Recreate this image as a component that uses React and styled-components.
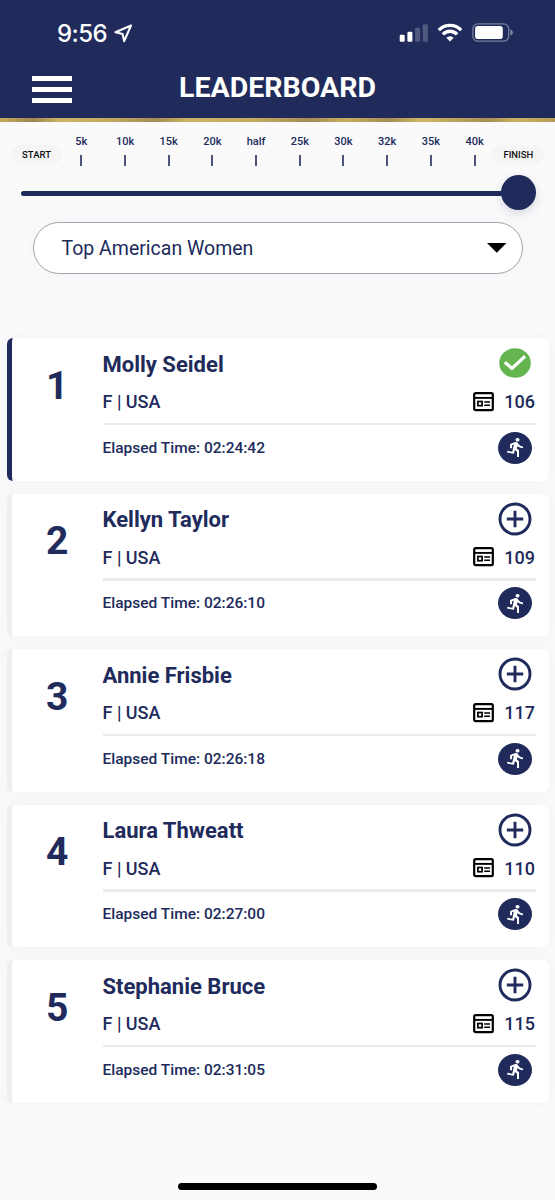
import React from "react";
import styled, { createGlobalStyle } from "styled-components";

const navy = "#202b5c";

const GlobalStyle = createGlobalStyle`
  * {
    box-sizing: border-box;
  }
  body {
    margin: 0;
    background: #fafafb;
    color: ${navy};
    font-family: Roboto, sans-serif;
  }
`;

const Page = styled.div`
  display: flex;
  flex-direction: column;
  width: 555px;
  height: 1200px;
  overflow: hidden;
`;

const Header = styled.header`
  height: 118px;
  background: ${navy};
  color: #fff;
`;

const StatusBar = styled.div`
  display: flex;
  justify-content: space-between;
  align-items: center;
  height: 65px;
  padding: 0 42px 0 57px;
`;

const Clock = styled.div`
  display: flex;
  align-items: center;
  gap: 7px;
  font-family: Inter, sans-serif;
  font-size: 24px;
  font-weight: 500;
  letter-spacing: -0.6px;
  line-height: 28px;
  padding-top: 2px;
`;

const TitleBar = styled.div`
  display: grid;
  grid-template-columns: 40px 1fr 40px;
  align-items: center;
  height: 46px;
  padding: 0 32px;
`;

const MenuButton = styled.button`
  display: flex;
  flex-direction: column;
  gap: 6px;
  padding: 3px 0 0;
  border: 0;
  background: none;
`;

const MenuBar = styled.span`
  width: 40px;
  height: 5px;
  background: #fff;
`;

const Title = styled.h1`
  margin: 0;
  text-align: center;
  font-size: 28.5px;
  font-weight: 700;
  line-height: 44px;
`;

const GoldRule = styled.div`
  flex: none;
  height: 4px;
  background: linear-gradient(
    100deg,
    #c6ab5c 0%,
    #9f8650 6%,
    #cdb463 11%,
    #c3a95f 20%,
    #a38b55 28%,
    #ccb363 34%,
    #c3aa60 46%,
    #a48b55 56%,
    #c9ae5e 62%,
    #a58d56 70%,
    #d0b765 76%,
    #a68e55 88%,
    #cbb160 93%,
    #b69b58 100%
  );
`;

const Course = styled.section`
  display: flex;
  flex: none;
  height: 51px;
  padding-left: 11px;
`;

const Pill = styled.div`
  position: relative;
  width: ${({ $wide }) => ($wide ? 52 : 51)}px;
  height: 19px;
  margin: 23px 0 0 ${({ $wide }) => ($wide ? -4 : 0)}px;
  border-radius: 10px;
  background: #f5f5f5;
  color: #111;
  text-align: center;
  font-size: 9.5px;
  font-weight: 500;
  line-height: 19px;
  &::after {
    content: "";
    position: absolute;
    top: 18px;
    left: 21px;
    border: 4px solid transparent;
    border-top-color: #f5f5f5;
  }
`;

const Splits = styled.div`
  display: flex;
  margin-left: -2.5px;
`;

const Split = styled.div`
  display: flex;
  flex-direction: column;
  align-items: center;
  gap: 7px;
  width: 43.7px;
  padding-top: 13px;
  font-size: 11px;
  font-weight: 500;
  line-height: 13px;
  &::after {
    content: "";
    height: 11px;
    border-left: 2px solid ${navy};
    opacity: 0.8;
  }
`;

const Slider = styled.div`
  display: flex;
  flex: none;
  align-items: center;
  height: 38px;
  padding: 0 19.5px 0 21px;
`;

const Track = styled.div`
  flex: 1;
  height: 5px;
  margin: 2px -2px 0 0;
  border-radius: 3px;
  background: ${navy};
`;

const Knob = styled.div`
  width: 35px;
  height: 35px;
  border-radius: 50%;
  background: ${navy};
  box-shadow: 0 4px 10px rgba(32, 43, 92, 0.16);
`;

const Select = styled.button`
  display: flex;
  flex: none;
  align-items: center;
  justify-content: space-between;
  width: 490px;
  height: 52px;
  margin: 10.6px 0 0 32.5px;
  padding: 1px 15px 0 28px;
  border: 1px solid #a6a6ae;
  border-radius: 26px;
  background: #fff;
  box-shadow: 0 0 16px rgba(60, 60, 90, 0.04);
  color: ${navy};
  font-family: inherit;
  font-size: 19.5px;
`;

const Cards = styled.main`
  display: flex;
  flex-direction: column;
  gap: 13.2px;
  flex: none;
  padding: 0 6px 0 7px;
  margin-top: 64.7px;
`;

const Card = styled.article`
  display: flex;
  height: 142.3px;
  border-left: 5px solid ${({ $active }) => ($active ? navy : "#eeeeee")};
  border-radius: 6px;
  background: #fff;
  box-shadow: 0 0 14px rgba(50, 60, 120, 0.045);
`;

const Rank = styled.div`
  width: 90.5px;
  padding-top: 23.4px;
  text-align: center;
  font-size: 39px;
  font-weight: 700;
  line-height: 48px;
`;

const Details = styled.div`
  flex: 1;
  padding-right: 13px;
`;

const Row = styled.div`
  display: flex;
  align-items: center;
  justify-content: space-between;
  height: ${({ $height }) => $height}px;
  padding-right: ${({ $inset }) => $inset || 0}px;
`;

const Name = styled.h2`
  margin: 0;
  padding-top: 1.4px;
  font-size: 22px;
  font-weight: 700;
`;

const Meta = styled.span`
  font-size: 18px;
  font-weight: 500;
`;

const Elapsed = styled.span`
  font-size: 15.5px;
  font-weight: 500;
`;

const Bib = styled.span`
  display: flex;
  align-items: center;
  gap: 10px;
  font-size: 18px;
  font-weight: 500;
`;

const Divider = styled.div`
  height: 2.5px;
  margin-top: 8.3px;
  background: #ebebed;
`;

const RunBadge = styled.div`
  display: flex;
  align-items: center;
  justify-content: center;
  width: 34px;
  height: 32px;
  border-radius: 50%;
  background: ${navy};
  color: #fff;
`;

const Footer = styled.footer`
  display: flex;
  justify-content: center;
  margin-top: auto;
  padding-bottom: 10.5px;
`;

const HomeIndicator = styled.div`
  width: 199px;
  height: 7px;
  border-radius: 4px;
  background: #000;
`;

const LocationIcon = () => (
  <svg width="19" height="20" viewBox="0 0 19 20">
    <path
      d="M17 1.5 L1.5 8.3 L8.6 10.1 L10.2 17.2 Z"
      fill="none"
      stroke="#fff"
      strokeWidth="2.1"
      strokeLinejoin="round"
    />
  </svg>
);

const StatusIcons = () => (
  <svg width="114" height="20" viewBox="0 0 114 20" fill="#fff">
    <rect x="0.7" y="11.8" width="5" height="7" rx="1.3" />
    <rect x="8.4" y="8.8" width="5" height="10" rx="1.3" />
    <rect x="16.1" y="4.8" width="5" height="14" rx="1.3" opacity="0.22" />
    <rect x="23.8" y="1.2" width="5" height="17.6" rx="1.3" opacity="0.22" />
    <g fill="none" stroke="#fff" strokeWidth="3.3">
      <path d="M39.8 7.1 a15.6 15.6 0 0 1 22.4 0" />
      <path d="M43.9 11.3 a9.8 9.8 0 0 1 14.2 0" />
    </g>
    <path d="M51 18.5 L47.3 14.8 a5.3 5.3 0 0 1 7.4 0 Z" />
    <rect
      x="73.9"
      y="0.9"
      width="35.8"
      height="17.3"
      rx="5"
      fill="none"
      stroke="#fff"
      strokeWidth="1.3"
      opacity="0.4"
    />
    <rect x="76.1" y="3" width="27.7" height="13" rx="2.8" />
    <path d="M111.4 6.5 q2.5 0.7 2.5 3 t-2.5 3 z" opacity="0.45" />
  </svg>
);

const CaretIcon = () => (
  <svg width="20" height="10" viewBox="0 0 20 10">
    <path d="M0 0 H19.5 L9.75 9.8 Z" />
  </svg>
);

const BibIcon = () => (
  <svg width="21" height="20" viewBox="0 0 21 20" fill="none" stroke="#000">
    <rect x="1.2" y="1.2" width="18.6" height="17" rx="1.4" strokeWidth="2.2" />
    <path d="M1 5.9 H20" strokeWidth="1.9" />
    <rect x="4.9" y="9.5" width="4.2" height="4.2" strokeWidth="1.7" />
    <path d="M11.2 10 H17 M11.2 13.2 H17" strokeWidth="1.6" />
  </svg>
);

const CheckIcon = () => (
  <svg width="32" height="30" viewBox="0 0 32 30">
    <ellipse cx="16" cy="15" rx="15.8" ry="14.8" fill="#64b550" />
    <path
      d="M5.8 14.2 L12.9 20.4 L26.1 8.3"
      fill="none"
      stroke="#fff"
      strokeWidth="3.2"
    />
  </svg>
);

const PlusIcon = () => (
  <svg width="34" height="34" viewBox="0 0 34 34" stroke={navy} fill="none">
    <circle cx="17" cy="17" r="15" strokeWidth="2.9" />
    <path d="M17 8.8 V25.2 M8.8 17 H25.2" strokeWidth="2.9" />
  </svg>
);

const RunIcon = () => (
  <svg
    width="16"
    height="19"
    viewBox="2.9 1.5 16.1 21.5"
    preserveAspectRatio="none"
    fill="currentColor"
  >
    <path d="M13.49 5.48c1.1 0 2-.9 2-2s-.9-2-2-2-2 .9-2 2 .9 2 2 2zm-3.6 13.9l1-4.4 2.1 2v6h2v-7.5l-2.1-2 .6-3c1.3 1.5 3.3 2.5 5.5 2.5v-2c-1.9 0-3.5-1-4.3-2.4l-1-1.6c-.4-.6-1-1-1.7-1-.3 0-.5.1-.8.1l-5.2 2.2v4.7h2v-3.4l1.8-.7-1.6 8.1-4.9-1-.4 2 7 1.4z" />
  </svg>
);

const splits = [
  "5k", "10k", "15k", "20k", "half", "25k", "30k", "32k", "35k", "40k",
];

const runners = [
  { name: "Molly Seidel", bib: 106, time: "02:24:42", followed: true },
  { name: "Kellyn Taylor", bib: 109, time: "02:26:10" },
  { name: "Annie Frisbie", bib: 117, time: "02:26:18" },
  { name: "Laura Thweatt", bib: 110, time: "02:27:00" },
  { name: "Stephanie Bruce", bib: 115, time: "02:31:05" },
];

const RunnerCard = ({ rank, name, bib, time, followed }) => (
  <Card $active={followed}>
    <Rank>{rank}</Rank>
    <Details>
      <Row $height={50.3} $inset={followed ? 5 : 4}>
        <Name>{name}</Name>
        {followed ? <CheckIcon /> : <PlusIcon />}
      </Row>
      <Row $height={26.1} $inset={1}>
        <Meta>F | USA</Meta>
        <Bib>
          <BibIcon />
          {bib}
        </Bib>
      </Row>
      <Divider />
      <Row $height={44.2} $inset={4}>
        <Elapsed>Elapsed Time: {time}</Elapsed>
        <RunBadge>
          <RunIcon />
        </RunBadge>
      </Row>
    </Details>
  </Card>
);

const App = () => (
  <Page>
    <GlobalStyle />
    <Header>
      <StatusBar>
        <Clock>
          9:56
          <LocationIcon />
        </Clock>
        <StatusIcons />
      </StatusBar>
      <TitleBar>
        <MenuButton aria-label="Menu">
          <MenuBar />
          <MenuBar />
          <MenuBar />
        </MenuButton>
        <Title>LEADERBOARD</Title>
      </TitleBar>
    </Header>
    <GoldRule />
    <Course>
      <Pill>START</Pill>
      <Splits>
        {splits.map((label) => (
          <Split key={label}>{label}</Split>
        ))}
      </Splits>
      <Pill $wide>FINISH</Pill>
    </Course>
    <Slider>
      <Track />
      <Knob />
    </Slider>
    <Select>
      Top American Women
      <CaretIcon />
    </Select>
    <Cards>
      {runners.map((runner, i) => (
        <RunnerCard key={runner.bib} rank={i + 1} {...runner} />
      ))}
    </Cards>
    <Footer>
      <HomeIndicator />
    </Footer>
  </Page>
);

export default App;
